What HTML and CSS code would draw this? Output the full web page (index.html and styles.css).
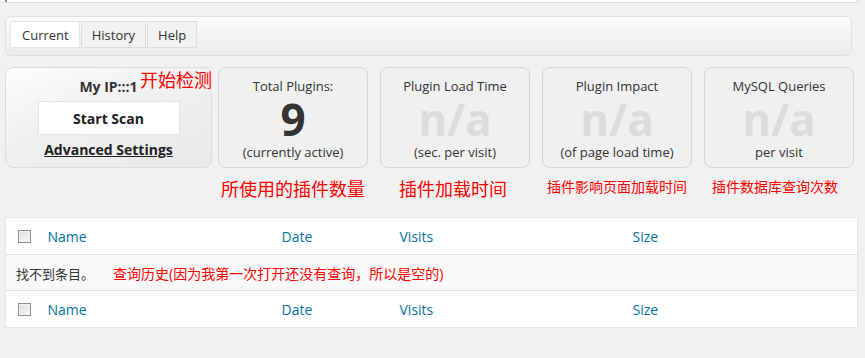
FILE: index.html
```html
<!DOCTYPE html>
<html lang="en">
<head>
<meta charset="utf-8">
<title>Plugin Performance</title>
<link rel="stylesheet" href="styles.css">
</head>
<body>
<div class="topbar"><span class="topbar-mark"></span></div>
<div class="wrap">
  <nav class="tabs-bar">
    <a class="tab active">Current</a>
    <a class="tab">History</a>
    <a class="tab">Help</a>
  </nav>

  <div class="cards">
    <div class="card card-scan">
      <div class="ip">My IP:::1</div>
      <button class="scan-btn">Start Scan</button>
      <a class="adv-link">Advanced Settings</a>
      <span class="note note-scan">开始检测</span>
    </div>
    <div class="card">
      <div class="card-title">Total Plugins:</div>
      <div class="card-value">9</div>
      <div class="card-sub">(currently active)</div>
    </div>
    <div class="card">
      <div class="card-title">Plugin Load Time</div>
      <div class="card-value na">n/a</div>
      <div class="card-sub">(sec. per visit)</div>
    </div>
    <div class="card">
      <div class="card-title">Plugin Impact</div>
      <div class="card-value na">n/a</div>
      <div class="card-sub">(of page load time)</div>
    </div>
    <div class="card">
      <div class="card-title">MySQL Queries</div>
      <div class="card-value na">n/a</div>
      <div class="card-sub">per visit</div>
    </div>
  </div>

  <div class="notes">
    <div class="notes-spacer"></div>
    <div class="notes-cell big">所使用的插件数量</div>
    <div class="notes-cell big">插件加载时间</div>
    <div class="notes-cell small">插件影响页面加载时间</div>
    <div class="notes-cell small">插件数据库查询次数</div>
  </div>

  <table class="history">
    <thead>
      <tr>
        <th class="col-cb"><span class="cb"></span></th>
        <th class="col-name">Name</th>
        <th class="col-date">Date</th>
        <th class="col-visits">Visits</th>
        <th class="col-size">Size</th>
      </tr>
    </thead>
    <tbody>
      <tr class="empty">
        <td colspan="5">找不到条目。<span class="note-inline">查询历史(因为我第一次打开还没有查询，所以是空的)</span></td>
      </tr>
    </tbody>
    <tfoot>
      <tr>
        <th class="col-cb"><span class="cb"></span></th>
        <th class="col-name">Name</th>
        <th class="col-date">Date</th>
        <th class="col-visits">Visits</th>
        <th class="col-size">Size</th>
      </tr>
    </tfoot>
  </table>
</div>
</body>
</html>
```

FILE: styles.css
```css
* { box-sizing: border-box; }

body {
  margin: 0;
  background: #f1f1f1;
  font-family: "Open Sans", "Noto Sans CJK SC", sans-serif;
  color: #333;
  font-size: 13px;
}

.topbar {
  width: 858px;
  height: 3px;
  background: #fff;
  border-bottom: 1px solid #dcdcdc;
  border-right: 1px solid #dcdcdc;
  border-bottom-right-radius: 3px;
  position: relative;
}
.topbar-mark {
  position: absolute;
  left: 5px;
  top: 0;
  width: 2px;
  height: 2px;
  background: #46b450;
}

.wrap {
  padding-left: 5px;
}

.tabs-bar {
  margin-top: 13px;
  width: 847px;
  height: 40px;
  border: 1px solid #e0e0e0;
  border-radius: 6px;
  background: linear-gradient(#fbfbfb, #ececec);
  padding: 4px 4px;
  display: flex;
  gap: 1px;
}
.tab {
  display: flex;
  align-items: center;
  height: 27px;
  padding: 0 10px;
  border: 1px solid #dedede;
  background: #f2f2f2;
  color: #333;
  font-size: 13px;
  cursor: pointer;
}
.tab.active {
  background: #fff;
  border-color: #e6e6e6;
  padding: 0 10px 0 11px;
}

.cards {
  margin-top: 11px;
  display: flex;
  gap: 12px;
}
.card {
  position: relative;
  width: 150px;
  height: 101px;
  border: 1px solid #d6d6d6;
  border-radius: 8px;
  background: #f0f0f0;
  padding-top: 9px;
  text-align: center;
}
.card-scan {
  width: 207px;
  margin-right: -6px;
  border-color: #dcdcdc;
  background: linear-gradient(160deg, #fdfdfd 0%, #f0f0f0 45%, #e9e9e9 100%);
  display: flex;
  flex-direction: column;
  align-items: center;
}
.ip {
  font-size: 14px;
  font-weight: 700;
  line-height: 20px;
  color: #333;
}
.scan-btn {
  margin-top: 4px;
  width: 142px;
  height: 34px;
  background: #fff;
  border: 1px solid #e4e4e4;
  border-radius: 2px;
  font-family: inherit;
  font-size: 14px;
  font-weight: 700;
  color: #222;
}
.adv-link {
  margin-top: 6px;
  font-size: 14px;
  font-weight: 700;
  line-height: 18px;
  color: #222;
  text-decoration: underline;
}
.note {
  position: absolute;
  color: #f00;
  font-size: 18px;
  line-height: 22px;
  white-space: nowrap;
}
.note-scan {
  left: 134px;
  top: 1px;
}

.card-title {
  font-size: 13px;
  line-height: 18px;
  color: #333;
}
.card-value {
  font-size: 44px;
  font-weight: 700;
  line-height: 48px;
  color: #333;
}
.card-value.na {
  color: #dcdcdc;
}
.card-sub {
  font-size: 13px;
  line-height: 18px;
  color: #333;
}

.notes {
  display: flex;
  gap: 12px;
  margin-top: 9px;
  height: 24px;
  align-items: center;
  color: #f00;
}
.notes-spacer {
  width: 201px;
}
.notes-cell {
  width: 150px;
  text-align: center;
  white-space: nowrap;
}
.notes-cell.big {
  font-size: 18px;
  line-height: 24px;
}
.notes-cell.big + .notes-cell.big {
  padding-right: 4px;
}
.notes-cell.small {
  font-size: 14px;
  line-height: 20px;
  margin-top: -4px;
}
.notes-cell.small:last-child {
  padding-right: 8px;
}

.history {
  margin-top: 16px;
  width: 853px;
  border-collapse: collapse;
  background: #fff;
  border: 1px solid #e5e5e5;
  box-shadow: 0 1px 1px rgba(0,0,0,0.04);
  table-layout: fixed;
}
.history th {
  height: 37px;
  padding: 0;
  text-align: left;
  font-weight: 400;
  font-size: 14px;
  color: #0074a2;
}
.history thead tr { border-bottom: 1px solid #e1e1e1; }
.history tfoot tr { border-top: 1px solid #e1e1e1; }
.col-cb { width: 32px; padding-left: 12px !important; }
.col-name { width: 234px; padding-left: 10px !important; }
.col-date { width: 118px; padding-left: 10px !important; }
.col-visits { width: 233px; padding-left: 10px !important; }
.col-size { padding-left: 10px !important; }

.cb {
  display: block;
  width: 13px;
  height: 13px;
  border: 1px solid #8e8f8f;
  background: linear-gradient(135deg, #dcdcdc, #fafafa);
  box-shadow: inset 0 0 0 1px #f3f3f3;
}

.history .empty td {
  height: 36px;
  background: #f9f9f9;
  padding: 0 10px;
  font-size: 13px;
  color: #333;
}
.note-inline {
  margin-left: 19px;
  color: #f00;
  font-size: 14px;
}
```
